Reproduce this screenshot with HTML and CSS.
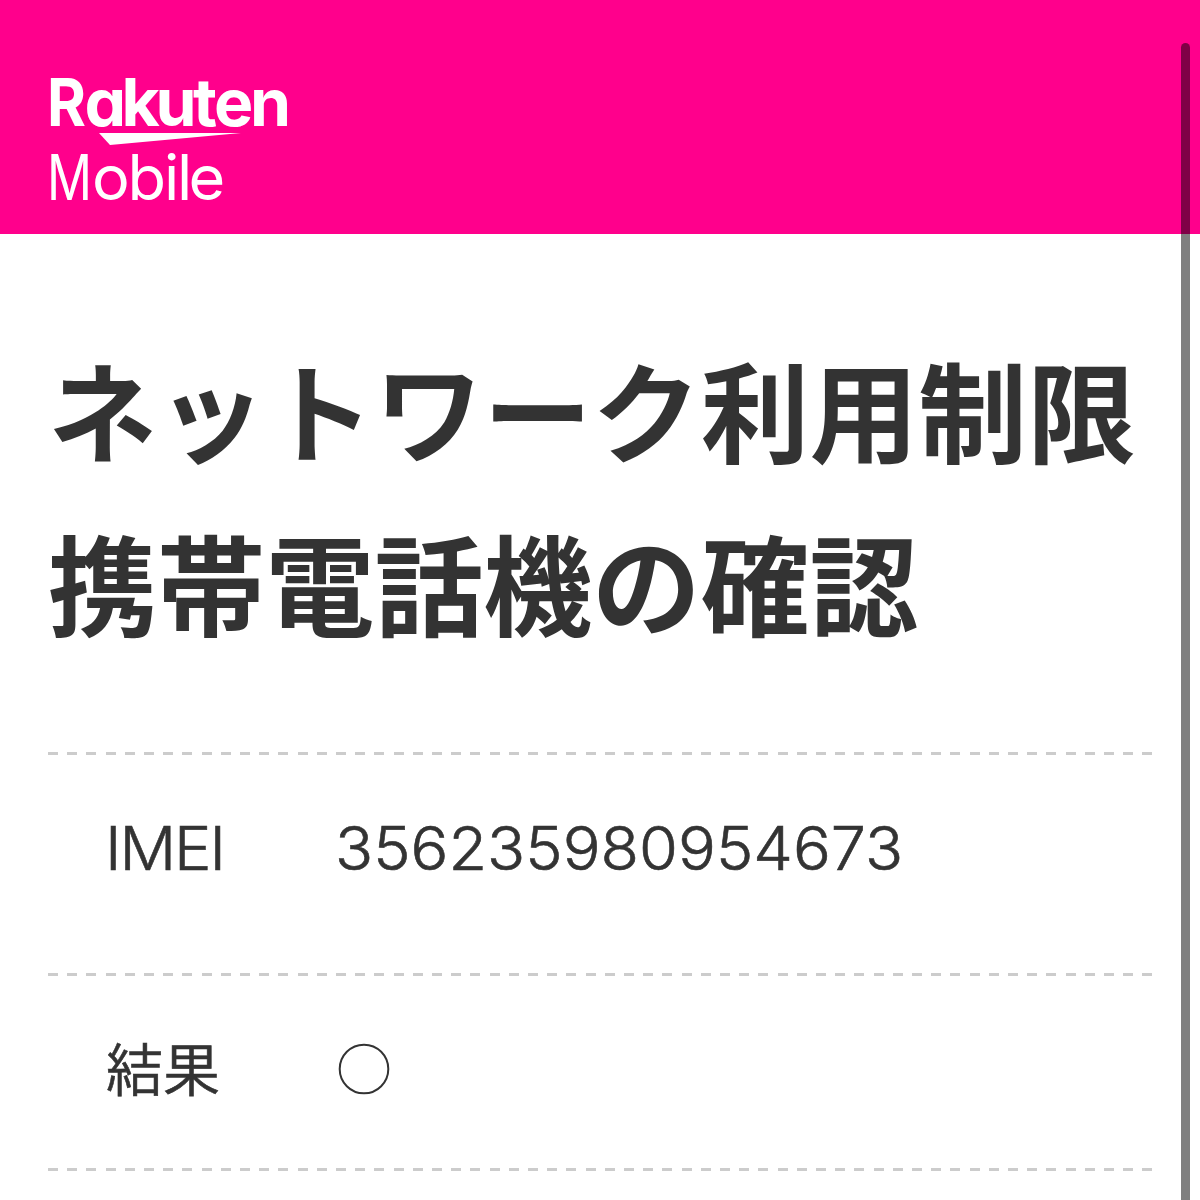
FILE: index.html
```html
<!DOCTYPE html>
<html lang="ja">
<head>
<meta charset="utf-8">
<title>Rakuten Mobile</title>
<link rel="stylesheet" href="styles.css">
</head>
<body>
<header class="header">
  <svg class="logo" viewBox="0 0 240 136" role="img" aria-label="Rakuten Mobile">
    <text class="logo-rakuten" y="58"><tspan x="-3" textLength="39" lengthAdjust="spacingAndGlyphs">R</tspan><tspan x="34.5 71.5 105.5 143 164 200">akuten</tspan></text>
    <path d="M49 65H191L60 77Z"/>
    <text class="logo-mobile" y="132"><tspan x="-3" textLength="45" lengthAdjust="spacingAndGlyphs">M</tspan><tspan x="42 77.5 114 127 138.5">obile</tspan></text>
  </svg>
</header>
<main class="content">
  <h1 class="title">ネットワーク利用制限<br>携帯電話機の確認</h1>
  <dl class="result">
    <div class="row row-imei"><dt class="latin">IMEI</dt><dd class="digits">356235980954673</dd></div>
    <div class="row row-status"><dt class="label">結果</dt><dd class="status">
      <svg class="mark" viewBox="0 0 52 52" role="img" aria-label="○"><circle cx="26" cy="26" r="24.3"/></svg>
    </dd></div>
  </dl>
</main>
<div class="scrollbar"></div>
</body>
</html>
```
FILE: styles.css
```css
* { box-sizing: border-box; }
body {
  margin: 0;
  height: 1200px;
  overflow: hidden;
  background: #fff;
  color: #333;
  font-family: "Noto Sans CJK JP", sans-serif;
}
.header { height: 234px; padding: 68px 50px 0; background: #ff008c; }
.logo { display: block; width: 240px; height: 136px; overflow: visible; fill: #fff; }
.logo-rakuten { font: 700 66px Inter, sans-serif; font-feature-settings: "cv11"; }
.logo-mobile { font: 400 63px Inter, sans-serif; }
.content { padding: 88px 48px 0; }
.title { margin: 0; font-size: 108.8px; line-height: 172.5px; font-weight: 700; white-space: nowrap; }
.result { margin: 85px 0 0; }
.row {
  display: flex;
  align-items: center;
  padding-left: 58px;
  background: repeating-linear-gradient(90deg, #ccc 0 10px, transparent 10px 19.2px) 0 0 / 100% 3px no-repeat;
}
.row-imei { height: 221px; padding-bottom: 28px; }
.row-status {
  height: 198px;
  padding-bottom: 7px;
  background:
    repeating-linear-gradient(90deg, #ccc 0 10px, transparent 10px 19.2px) 0 0 / 100% 3px no-repeat,
    repeating-linear-gradient(90deg, #ccc 0 10px, transparent 10px 19.2px) 0 100% / 100% 3px no-repeat;
}
dt { width: 230px; margin-top: -6px; font-size: 57px; line-height: 80px; font-weight: 350; }
dd { margin: 0; font-size: 60px; line-height: 80px; }
.label { -webkit-text-stroke: .6px #333; }
.latin, .digits {
  margin-top: -1px;
  font-family: Inter, sans-serif;
  font-size: 60px;
  font-weight: 300;
  -webkit-text-stroke: .6px #333;
  transform-origin: 0 50%;
}
.latin { letter-spacing: -2px; transform: translateX(-1px) scaleX(1.05); }
.digits { transform: translateX(-1px) scaleX(1.05); }
.status { display: flex; padding-left: 2px; }
.mark { width: 52px; height: 52px; fill: none; stroke: #333; stroke-width: 2; }
.scrollbar {
  position: absolute;
  top: 43px;
  right: 10px;
  width: 9px;
  height: 1157px;
  border-radius: 5px 5px 0 0;
  background: rgba(0, 0, 0, .5);
}
```
